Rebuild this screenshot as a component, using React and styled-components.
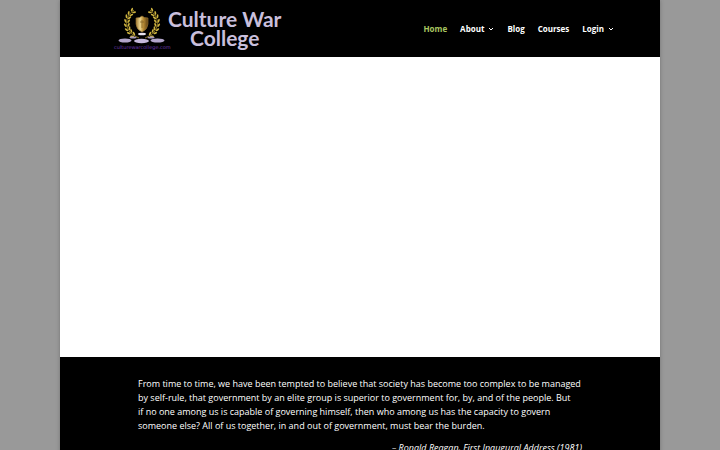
import React from 'react'
import styled, { createGlobalStyle } from 'styled-components'

let black = '#000'
let gray = '#999'
let green = '#a8c660'
let lavender = '#c9bfdc'

let GlobalStyle = createGlobalStyle`
  * {
    box-sizing: border-box;
  }

  html {
    scrollbar-width: none;
  }

  body {
    background: ${gray};
    color: #fff;
    font-family: 'Open Sans', sans-serif;
    margin: 0;
  }
`

let navItems = [
  { label: 'Home', active: true },
  { label: 'About', hasMenu: true },
  { label: 'Blog' },
  { label: 'Courses' },
  { label: 'Login', hasMenu: true }
]

// distance of each pair of leaves from the center line, top to bottom
let leaves = [
  { x: 9, y: 10, turn: 50 },
  { x: 12, y: 13, turn: 38 },
  { x: 14, y: 16, turn: 24 },
  { x: 15, y: 20, turn: 8 },
  { x: 15, y: 24, turn: -8 },
  { x: 14, y: 28, turn: -25 },
  { x: 12, y: 31, turn: -42 },
  { x: 9, y: 34, turn: -58 }
]

let Branch = ({ flip }) => (
  <g transform={flip ? 'translate(32 0) scale(-1 1)' : 'translate(32 0)'}>
    <path d="M8 9 C18 16 18 29 7 35 L3 37" fill="none" stroke="#9a8128" strokeWidth=".9" />
    {leaves.map(({ x, y, turn }) => (
      <g key={y} transform={`translate(${x} ${y}) rotate(${-turn})`} fill="#cdb340">
        <ellipse cx="-1.5" cy="-.8" rx=".9" ry="2" transform="rotate(-28)" />
        <ellipse cx="1.5" cy="-.8" rx=".9" ry="2" transform="rotate(28)" />
      </g>
    ))}
  </g>
)

let Emblem = () => (
  <svg width="60" height="56" viewBox="0 0 60 56" aria-hidden="true">
    <defs>
      <linearGradient id="shield" x1="0" x2="1" y1="0" y2="0">
        <stop offset="0" stopColor="#a07a35" />
        <stop offset=".35" stopColor="#ecd58e" />
        <stop offset=".6" stopColor="#b98d35" />
        <stop offset="1" stopColor="#5b3f12" />
      </linearGradient>
    </defs>
    <Branch />
    <Branch flip />
    <path
      d="M26 17 Q30 17 32 15 Q34 17 38 17 V23 Q38 28 32 31 Q26 28 26 23 Z"
      fill="url(#shield)"
      stroke="#9a7530"
      strokeWidth=".6"
    />
    <path d="M32 19 V27 M30 21 H34" stroke="#7d5b20" strokeWidth=".7" />
    <ellipse cx="32" cy="33" rx="4" ry="1.3" fill="#e8e2ee" />
    <ellipse cx="23" cy="36.5" rx="3.5" ry="1" fill="#a79abb" />
    <ellipse cx="41" cy="36.5" rx="3.5" ry="1" fill="#a79abb" />
    <ellipse cx="15" cy="39.5" rx="6.5" ry="2" fill="#b3a6cc" />
    <ellipse cx="31.5" cy="40" rx="7.5" ry="2.2" fill="#c5b9dc" />
    <ellipse cx="47.5" cy="39.5" rx="7" ry="2" fill="#b3a6cc" />
  </svg>
)

let Chevron = () => (
  <svg width="6" height="4" viewBox="0 0 6 4" aria-hidden="true">
    <path d="M1 1 L3 3 L5 1" fill="none" stroke="currentColor" strokeWidth="1" />
  </svg>
)

let App = () => (
  <>
    <GlobalStyle />
    <StyledPage>
      <StyledHeader>
        <StyledLogo href="#home">
          <StyledBadge>
            <Emblem />
            <StyledDomain>culturewarcollege.com</StyledDomain>
          </StyledBadge>
          <StyledName>Culture War<br />College</StyledName>
        </StyledLogo>
        <StyledNav>
          {navItems.map(({ label, active, hasMenu }) => (
            <StyledNavLink key={label} href={`#${label.toLowerCase()}`} $active={active}>
              {label}
              {hasMenu ? <Chevron /> : null}
            </StyledNavLink>
          ))}
        </StyledNav>
      </StyledHeader>
      <StyledHero />
      <StyledQuote>
        <p>
          From time to time, we have been tempted to believe that society has become too complex to be managed<br />
          by self-rule, that government by an elite group is superior to government for, by, and of the people. But<br />
          if no one among us is capable of governing himself, then who among us has the capacity to govern<br />
          someone else? All of us together, in and out of government, must bear the burden.
        </p>
        <StyledSource>– Ronald Reagan, First Inaugural Address (1981)</StyledSource>
      </StyledQuote>
    </StyledPage>
  </>
)

let StyledPage = styled.div`
  background: ${black};
  box-shadow: 0 0 4px rgba(0, 0, 0, 0.25);
  margin: 0 auto;
  max-width: 1080px;
  min-height: 100vh;
  width: calc(100% - 120px);
`

let StyledHeader = styled.header`
  align-items: center;
  background: ${black};
  display: flex;
  height: 57px;
  justify-content: space-between;
  padding: 0 46px 0 50px;
`

let StyledLogo = styled.a`
  color: ${lavender};
  display: flex;
  height: 56px;
  text-decoration: none;
`

let StyledBadge = styled.span`
  display: grid;
  position: relative;
  width: 58px;
`

let StyledDomain = styled.span`
  bottom: 7px;
  color: #6a38b0;
  font-family: 'DejaVu Sans', sans-serif;
  font-size: 5px;
  left: 4px;
  line-height: 6px;
  position: absolute;
`

let StyledName = styled.span`
  font-family: Lato, sans-serif;
  font-size: 21px;
  font-weight: 700;
  line-height: 19px;
  padding-top: 8px;
  text-align: center;
`

let StyledNav = styled.nav`
  display: flex;
  gap: 13px;
`

let StyledNavLink = styled.a`
  align-items: center;
  color: ${({ $active }) => $active ? green : '#fff'};
  display: flex;
  font-size: 8px;
  font-weight: 700;
  gap: 4px;
  line-height: 12px;
  text-decoration: none;
`

let StyledHero = styled.section`
  background: #fff;
  height: 300px;
`

let StyledQuote = styled.blockquote`
  font-family: 'Open Sans', sans-serif;
  font-size: 9px;
  font-weight: 500;
  line-height: 14px;
  margin: 0;
  padding: 20px 78px;
  white-space: nowrap;

  p {
    margin: 0;
  }
`

let StyledSource = styled.footer`
  font-style: italic;
  margin-top: 8px;
  text-align: right;
`

export default App
